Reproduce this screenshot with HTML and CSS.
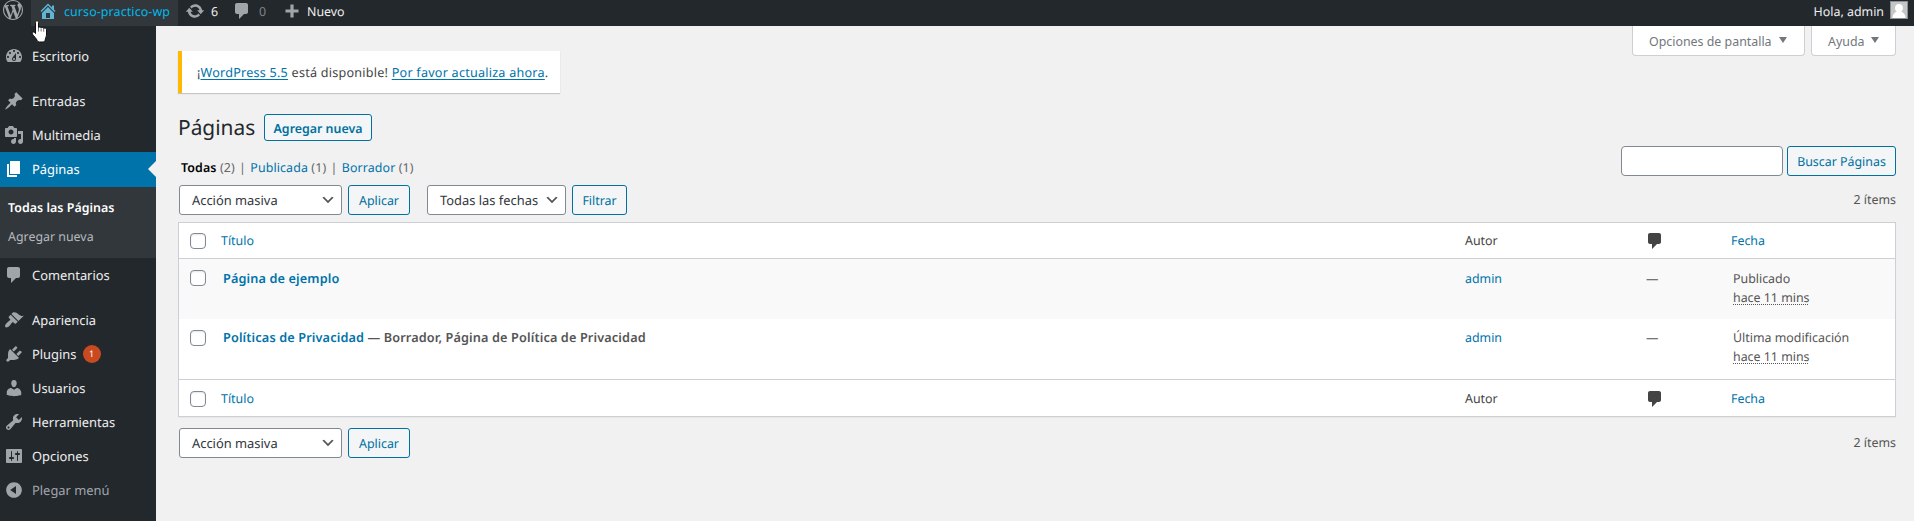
FILE: index.html
```html
<!DOCTYPE html>
<html lang="es">
<head>
<meta charset="utf-8">
<title>Páginas ‹ curso-practico-wp — WordPress</title>
<link rel="stylesheet" href="styles.css">
</head>
<body>
<svg class="sprite" aria-hidden="true">
  <symbol id="comment" viewBox="0 0 20 20"><path d="M5 2h9c1.1 0 2 .9 2 2v7c0 1.1-.9 2-2 2h-2l-5 5v-5H5c-1.1 0-2-.9-2-2V4c0-1.1.9-2 2-2z"/></symbol>
</svg>
<header class="adminbar">
  <a class="bar-logo"><svg class="icon" viewBox="0 0 20 20"><path d="M20 10c0-5.51-4.49-10-10-10C4.48 0 0 4.49 0 10c0 5.52 4.48 10 10 10 5.51 0 10-4.48 10-10zM7.78 15.37L4.37 6.22c.55-.02 1.17-.08 1.17-.08.5-.06.44-1.13-.06-1.11 0 0-1.45.11-2.37.11-.18 0-.37 0-.58-.01C4.12 2.69 6.87 1.11 10 1.11c2.33 0 4.45.87 6.05 2.34-.68-.11-1.65.39-1.65 1.58 0 .74.45 1.36.9 2.1.35.61.55 1.36.55 2.46 0 1.49-1.4 5-1.4 5l-3.03-8.37c.54-.02.82-.17.82-.17.5-.05.44-1.25-.06-1.22 0 0-1.44.12-2.38.12-.87 0-2.33-.12-2.33-.12-.5-.03-.56 1.2-.06 1.22l.92.08 1.26 3.41zM17.41 10c.24-.64.74-1.87.43-4.25.7 1.29 1.05 2.71 1.05 4.25 0 3.29-1.73 6.24-4.4 7.78.97-2.59 1.94-5.2 2.92-7.78zM6.1 18.09C3.12 16.65 1.11 13.53 1.11 10c0-1.3.23-2.48.72-3.59C3.25 10.3 4.67 14.2 6.1 18.09zm4.03-6.63l2.58 6.98c-.86.29-1.76.45-2.71.45-.79 0-1.57-.11-2.29-.33.81-2.38 1.62-4.74 2.42-7.1z"/></svg></a>
  <a class="bar-site"><svg class="icon" viewBox="0 0 20 20"><path d="M16 8.5l1.53 1.53-1.06 1.06L10 4.6l-6.47 6.5-1.06-1.07L10 2.5l4 4v-2h2v4zm-6-2.46l6 5.99V18H4v-5.97zM12 17v-5H8v5h4z"/></svg><span>curso-practico-wp</span></a>
  <a class="bar-item bar-updates"><svg class="icon" viewBox="0 0 20 20"><path d="M10.2 3.28c3.53 0 6.43 2.61 6.92 6h2.08l-3.5 4-3.5-4h2.32c-.45-1.97-2.21-3.45-4.32-3.45-1.45 0-2.73.71-3.54 1.78L4.95 5.66C6.23 4.2 8.11 3.28 10.2 3.28zm-.4 13.44c-3.52 0-6.43-2.61-6.92-6H.8l3.5-4c1.17 1.33 2.33 2.67 3.5 4H5.48c.45 1.97 2.21 3.45 4.32 3.45 1.45 0 2.73-.71 3.54-1.78l1.71 1.95c-1.28 1.46-3.15 2.38-5.25 2.38z"/></svg><span>6</span></a>
  <a class="bar-item bar-comments"><svg class="icon"><use href="#comment"/></svg><span>0</span></a>
  <a class="bar-item bar-new"><svg class="icon" viewBox="0 0 20 20"><path d="M16.5 8.4v3.200h-4.900v4.900H8.400v-4.900H3.500V8.400h4.900V3.500h3.200v4.900z"/></svg><span>Nuevo</span></a>
  <a class="bar-user"><span>Hola, admin</span>
    <svg class="avatar" viewBox="0 0 18 18"><path fill="#8c8f94" d="M0 0h18v18H0z"/><path fill="#c6c6c6" d="M1 1h16v16H1z"/><path fill="#fff" d="M9 3c2.400 0 4 1.700 4 3.900 0 1.700-.8 2.900-1.800 3.700 2.600.9 4.200 3.300 4.300 6.400h-13c.1-3.100 1.700-5.500 4.300-6.400C5.800 9.800 5 8.600 5 6.900 5 4.700 6.600 3 9 3z"/></svg></a>
</header>
<svg class="pointer" viewBox="0 0 17 24"><path fill="#fff" stroke="#111" stroke-width="1" d="M4.500 2.500c0-2.300 3-2.300 3 0v5.200c.3-1.200 2.500-1 2.600.3.500-1 2.500-.8 2.600.6.600-1 2.800-.7 2.800 1.100v5.500c0 1.500-1.300 3-1.300 4.500 0 1.200-1 2.300-2.200 2.300H8.300c-1 0-1.600-.5-2-1.300-1-2.400-3.400-4.300-4.900-6.600-1.100-1.900 1-2.900 2.300-1.500l.8.900z"/><path stroke="#111" stroke-width=".6" d="M7.500 8v3.500M10.100 8.500v3M12.700 9.200v2.500"/></svg>

<div class="layout">
<nav class="menu">
  <a class="entry"><svg class="icon" viewBox="0 0 20 20"><path d="M3.760 16h12.480c1.100-1.370 1.760-3.110 1.760-5 0-4.420-3.580-8-8-8s-8 3.580-8 8c0 1.890.66 3.630 1.760 5zM10 4c.55 0 1 .45 1 1s-.45 1-1 1-1-.45-1-1 .45-1 1-1zM6 6c.55 0 1 .45 1 1s-.45 1-1 1-1-.45-1-1 .45-1 1-1zm8 0c.55 0 1 .45 1 1s-.45 1-1 1-1-.45-1-1 .45-1 1-1zm-5.370 5.550L12 7v6c0 1.100-.9 2-2 2s-2-.9-2-2c0-.57.24-1.080.63-1.450zM4 10c.55 0 1 .45 1 1s-.45 1-1 1-1-.45-1-1 .45-1 1-1zm12 0c.55 0 1 .45 1 1s-.45 1-1 1-1-.45-1-1 .45-1 1-1zm-5 3c0-.55-.45-1-1-1s-1 .45-1 1 .45 1 1 1 1-.45 1-1z"/></svg>Escritorio</a>
  <div class="separator"></div>
  <a class="entry"><svg class="icon" viewBox="0 0 20 20"><path d="M10.440 3.020l1.820-1.820 6.360 6.350-1.830 1.820c-1.050-.68-2.480-.57-3.410.36l-.75.75c-.92.93-1.040 2.350-.35 3.410l-1.830 1.820-2.410-2.410-2.800 2.790c-.42.42-3.380 2.710-3.800 2.290s1.860-3.390 2.280-3.810l2.790-2.790L4.100 9.360l1.830-1.820c1.050.69 2.480.57 3.400-.36l.75-.75c.93-.92 1.050-2.350.36-3.410z"/></svg>Entradas</a>
  <a class="entry"><svg class="icon" viewBox="0 0 20 20"><path d="M13 11V4c0-.55-.45-1-1-1h-1.670L9 1H5L3.670 3H2c-.55 0-1 .45-1 1v7c0 .55.45 1 1 1h10c.55 0 1-.45 1-1zM7 4.500c1.380 0 2.500 1.120 2.500 2.500S8.380 9.500 7 9.500 4.500 8.380 4.500 7 5.620 4.500 7 4.500zM14 6h5v10.500c0 1.380-1.120 2.500-2.500 2.500S14 17.880 14 16.500s1.120-2.500 2.500-2.500c.17 0 .34.02.5.05V9h-3V6zm-4 8.050V13h2v3.500c0 1.380-1.120 2.500-2.500 2.500S7 17.880 7 16.500 8.120 14 9.500 14c.17 0 .34.02.5.05z"/></svg>Multimedia</a>
  <a class="entry current"><svg class="icon" viewBox="0 0 20 20"><path d="M6 15V2h10v13H6zm-1 1h8v2H3V5h2v11z"/></svg>Páginas</a>
  <div class="submenu"><a class="sub-current">Todas las Páginas</a><a>Agregar nueva</a></div>
  <a class="entry"><svg class="icon"><use href="#comment"/></svg>Comentarios</a>
  <div class="separator"></div>
  <a class="entry"><svg class="icon" viewBox="0 0 20 20"><path d="M14.480 11.060L7.410 3.990l1.500-1.500c.5-.56 2.300-.47 3.510.32 1.210.8 1.430 1.280 2.910 2.100 1.180.64 2.450 1.260 4.450.85zm-.71.71L6.700 4.700 4.930 6.470c-.39.39-.39 1.020 0 1.410l1.060 1.060c.39.39.39 1.030 0 1.420-.6.6-1.430 1.110-2.210 1.690-.35.26-.7.53-1.010.84C1.430 14.230.4 16.080 1.400 17.070c.99 1 2.840-.03 4.180-1.360.31-.31.58-.66.85-1.020.57-.78 1.080-1.610 1.690-2.210.39-.39 1.020-.39 1.410 0l1.060 1.060c.39.39 1.020.39 1.410 0z"/></svg>Apariencia</a>
  <a class="entry"><svg class="icon" viewBox="0 0 20 20"><path d="M13.110 4.360L9.870 7.600 8 5.730l3.240-3.240c.35-.34 1.050-.2 1.560.32.52.51.66 1.210.31 1.550zm-8 1.770l.91-1.120 9.010 9.010-1.190.84c-.71.71-2.630 1.160-3.820 1.160H6.140L4.900 17.260c-.59.59-1.540.59-2.120 0-.59-.58-.59-1.530 0-2.120l1.240-1.240v-3.880c0-1.130.4-3.190 1.090-3.890zm7.260 3.970l3.240-3.240c.34-.35 1.040-.21 1.550.31.52.51.66 1.210.31 1.550l-3.240 3.250z"/></svg>Plugins<span class="count">1</span></a>
  <a class="entry"><svg class="icon" viewBox="0 0 20 20"><path d="M10 9.250c-2.270 0-2.730-3.440-2.730-3.440C7 4.020 7.820 2 9.970 2c2.160 0 2.980 2.020 2.710 3.810 0 0-.41 3.440-2.680 3.440zm0 2.570L12.720 10c2.390 0 4.520 2.330 4.520 4.530v2.490s-3.650 1.130-7.240 1.130c-3.650 0-7.240-1.130-7.240-1.130v-2.490c0-2.250 1.940-4.480 4.470-4.480z"/></svg>Usuarios</a>
  <a class="entry"><svg class="icon" viewBox="0 0 20 20"><path d="M16.680 9.770c-1.340 1.340-3.300 1.670-4.950.99l-5.410 6.520c-.99.99-2.590.99-3.580 0s-.99-2.590 0-3.570l6.520-5.420c-.68-1.650-.35-3.610.99-4.950 1.280-1.280 3.120-1.620 4.720-1.060l-2.890 2.890 2.820 2.820 2.860-2.870c.53 1.580.18 3.390-1.080 4.650zM3.810 16.210c.4.39 1.040.39 1.430 0 .4-.4.4-1.040 0-1.430-.39-.4-1.030-.4-1.430 0-.39.39-.39 1.030 0 1.430z"/></svg>Herramientas</a>
  <a class="entry"><svg class="icon" viewBox="0 0 20 20"><path d="M18 16V4c0-.55-.45-1-1-1H3c-.55 0-1 .45-1 1v12c0 .55.45 1 1 1h14c.55 0 1-.45 1-1zM8 11h1c.55 0 1 .45 1 1s-.45 1-1 1H8v1.500c0 .28-.22.5-.5.5s-.5-.22-.5-.5V13H6c-.55 0-1-.45-1-1s.45-1 1-1h1V5.500c0-.28.22-.5.5-.5s.5.22.5.5V11zm5-2h-1c-.55 0-1-.45-1-1s.45-1 1-1h1V5.500c0-.28.22-.5.5-.5s.5.22.5.5V7h1c.55 0 1 .45 1 1s-.45 1-1 1h-1v5.500c0 .28-.22.5-.5.5s-.5-.22-.5-.5V9z"/></svg>Opciones</a>
  <a class="entry collapse"><svg class="icon" viewBox="0 0 20 20"><path d="M10 2.160c4.330 0 7.840 3.510 7.840 7.840s-3.510 7.840-7.840 7.840S2.160 14.330 2.160 10 5.710 2.160 10 2.160zm2 11.720V6.120L6.180 9.970z"/></svg>Plegar menú</a>
</nav>

<main class="content">
  <div class="top">
    <div class="notice"><p>¡<a>WordPress 5.5</a> está disponible! <a>Por favor actualiza ahora</a>.</p></div>
    <div class="screen-tabs">
      <button class="tab tab-options">Opciones de pantalla<i></i></button>
      <button class="tab tab-help">Ayuda<i></i></button>
    </div>
  </div>
  <div class="heading"><h1>Páginas</h1><a class="btn btn-add">Agregar nueva</a></div>
  <div class="filters">
    <ul class="views">
      <li class="v-all"><b>Todas</b> <span>(2)</span></li><li class="bar">|</li>
      <li class="v-pub"><a>Publicada</a> <span>(1)</span></li><li class="bar">|</li>
      <li><a>Borrador</a> <span>(1)</span></li>
    </ul>
    <div class="search"><input class="search-box" type="text"><a class="btn btn-search">Buscar Páginas</a></div>
  </div>
  <div class="tablenav">
    <div class="select sel-bulk">Acción masiva<svg viewBox="0 0 20 20"><path d="M5 6l5 5 5-5 2 1-7 7-7-7 2-1z"/></svg></div>
    <a class="btn btn-apply">Aplicar</a>
    <div class="select sel-date">Todas las fechas<svg viewBox="0 0 20 20"><path d="M5 6l5 5 5-5 2 1-7 7-7-7 2-1z"/></svg></div>
    <a class="btn btn-filter">Filtrar</a>
    <span class="items">2 ítems</span>
  </div>
  <div class="table">
    <div class="row head"><i class="check"></i><a>Título</a><span>Autor</span><svg class="icon"><use href="#comment"/></svg><a>Fecha</a></div>
    <div class="row body odd"><i class="check"></i><p class="title"><a>Página de ejemplo</a></p><a>admin</a><span class="dash">—</span><p class="date">Publicado<br><abbr>hace 11 mins</abbr></p></div>
    <div class="row body even"><i class="check"></i><p class="title"><a>Políticas de Privacidad</a> — Borrador, Página de Política de Privacidad</p><a>admin</a><span class="dash">—</span><p class="date">Última modificación<br><abbr>hace 11 mins</abbr></p></div>
    <div class="row foot"><i class="check"></i><a>Título</a><span>Autor</span><svg class="icon"><use href="#comment"/></svg><a>Fecha</a></div>
  </div>
  <div class="tablenav bottom">
    <div class="select sel-bulk">Acción masiva<svg viewBox="0 0 20 20"><path d="M5 6l5 5 5-5 2 1-7 7-7-7 2-1z"/></svg></div>
    <a class="btn btn-apply">Aplicar</a>
    <span class="items">2 ítems</span>
  </div>
</main>
</div>
</body>
</html>
```
FILE: styles.css
```css
* { box-sizing: border-box; }
body {
  margin: 0;
  height: 521px;
  overflow: hidden;
  background: #f1f1f1;
  color: #444;
  font: 12.4px/19px "Noto Sans", "Open Sans", sans-serif;
  text-rendering: geometricPrecision;
}
p, h1, ul { margin: 0; padding: 0; font-weight: 400; }
a { color: #0073aa; }
.sprite { display: none; }
.icon { width: 20px; height: 20px; flex: none; fill: currentColor; }

/* Admin bar */
.adminbar {
  display: flex;
  height: 26px;
  padding-left: 3px;
  background: #23282d;
  color: #eee;
}
.adminbar a { display: flex; align-items: center; height: 26px; padding-bottom: 4px; color: #eee; }
.adminbar .icon { color: #a0a5aa; }
.adminbar .bar-logo { width: 28px; padding-bottom: 6px; }
.adminbar .bar-site { width: 147px; padding-left: 7px; gap: 6px; background: #32373c; color: #00b9eb; letter-spacing: .12px; }
.bar-site .icon { color: #5fb5d3; }
.adminbar .bar-updates { width: 52px; padding-left: 7px; gap: 6px; }
.adminbar .bar-comments { width: 52px; padding-left: 2px; gap: 7px; }
.bar-comments span { color: #7c8186; }
.adminbar .bar-new { gap: 5px; }
.adminbar .bar-user { margin-left: auto; padding-right: 6px; gap: 6px; }
.avatar { width: 18px; height: 18px; margin-top: -2px; }
.pointer { position: absolute; left: 31px; top: 20px; width: 17px; height: 24px; z-index: 2; }

/* Side menu */
.layout { display: flex; height: 495px; }
.menu { width: 156px; flex: none; padding-top: 13px; background: #23282d; }
.entry {
  display: flex;
  align-items: center;
  height: 34.2px;
  padding-left: 4px;
  gap: 8px;
  color: #eee;
  font-size: 12.9px;
}
.entry .icon { color: #a0a5aa; margin-top: -1px; }
.separator { height: 10.800px; }
.current {
  background: #0073aa;
  color: #fff;
}
.current .icon { color: #fff; }
.current::after {
  content: "";
  margin-left: auto;
  border: 8px solid transparent;
  border-right-color: #f1f1f1;
  border-left: 0;
}
.submenu { height: 71.400px; padding: 7px 8px; background: #32373c; }
.submenu a { display: block; height: 29px; line-height: 28px; color: #b4b9be; }
.submenu .sub-current { color: #fff; font-weight: 600; letter-spacing: .05px; }
.count {
  width: 18px;
  height: 18px;
  margin-left: -2px;
  border-radius: 9px;
  background: #ca4a1f;
  color: #fff;
  font-size: 9px;
  line-height: 18px;
  text-align: center;
}
.collapse, .collapse .icon { color: #a0a5aa; }

/* Content */
.content { flex: 1; padding: 0 18px 0 22px; }
.top { display: flex; justify-content: space-between; height: 88px; }
.notice {
  width: 382px;
  height: 42px;
  margin-top: 25px;
  padding: 12px 15px;
  border-left: 4px solid #ffb900;
  background: #fff;
  box-shadow: 0 1px 1px rgba(0, 0, 0, .18);
  font-size: 12.6px;
  letter-spacing: .23px;
  white-space: nowrap;
}
.notice a { text-decoration: underline; text-underline-offset: 2px; }
.screen-tabs { display: flex; gap: 6px; }
.tab {
  display: flex;
  align-items: center;
  gap: 7px;
  height: 30px;
  padding: 1px 0 0 16px;
  border: 1px solid #ccd0d4;
  border-top: 0;
  border-radius: 0 0 4px 4px;
  background: #fff;
  color: #72777c;
  font: inherit;
  white-space: nowrap;
}
.tab i { border: 4px solid transparent; border-top: 6px solid #72777c; border-bottom: 0; margin-top: -2px; }
.tab-options { width: 173px; }
.tab-help { width: 85px; }

.btn {
  display: flex;
  align-items: center;
  justify-content: center;
  height: 30px;
  border: 1px solid #0071a1;
  border-radius: 3px;
  background: #f3f5f6;
  color: #0071a1;
  white-space: nowrap;
}
.heading { display: flex; align-items: center; height: 27px; gap: 9px; }
.heading h1 { width: 77px; padding-top: 1px; font-size: 20.900px; line-height: 27px; color: #23282d; white-space: nowrap; }
.btn-add { width: 108px; height: 27px; padding-top: 1px; font-weight: 600; }

.filters { display: flex; justify-content: space-between; height: 44px; padding-top: 5px; }
.views { display: flex; padding: 12px 0 0 3px; list-style: none; white-space: nowrap; color: #666; letter-spacing: .12px; }
.views b { color: #000; font-weight: 600; }
.views .bar { width: 15.500px; text-align: center; }
.search { display: flex; gap: 4px; }
.search-box { width: 162px; height: 30px; border: 1px solid #7e8993; border-radius: 4px; background: #fff; }
.btn-search { width: 109px; }

.tablenav { display: flex; height: 37px; padding-left: 1px; }
.select {
  display: flex;
  align-items: center;
  justify-content: space-between;
  height: 30px;
  padding: 0 5px 0 12px;
  border: 1px solid #7e8993;
  border-radius: 3px;
  background: #fff;
  color: #32373c;
  font-size: 12.9px;
  white-space: nowrap;
}
.select svg { width: 16px; height: 16px; fill: #555; }
.sel-bulk { width: 163px; }
.sel-date { width: 139px; margin-left: 17px; }
.btn-apply { width: 62px; margin-left: 6px; }
.btn-filter { width: 55px; margin-left: 6px; }
.items { margin-left: auto; padding-top: 5px; color: #555; }

.table {
  height: 195px;
  border: 1px solid #ccd0d4;
  background: #fff;
  box-shadow: 0 1px 1px rgba(0, 0, 0, .04);
}
.row { display: grid; grid-template-columns: 42px 1243px 180px 87px 1fr; }
.row > :nth-child(3) { padding-left: 1px; }
.head { height: 36px; border-bottom: 1px solid #ccd0d4; align-items: center; }
.foot { height: 38px; border-top: 1px solid #ccd0d4; align-items: center; }
.row .icon { color: #444; margin-left: 1px; }
.body { height: 60px; padding-top: 10px; color: #555; }
.odd { background: #f9f9f9; }
.even { padding-top: 9px; }
.check {
  width: 16px;
  height: 16px;
  margin-left: 11px;
  border: 1px solid #7e8993;
  border-radius: 4px;
  background: #fff;
  box-shadow: inset 0 1px 2px rgba(0, 0, 0, .1);
}
.odd .check { margin-top: 1px; }
.even .check { margin-top: 2px; }
.title { padding-left: 2px; font-size: 12.700px; font-weight: 600; letter-spacing: .13px; }
.dash { padding-left: 2px; }
.date { padding-left: 2px; line-height: 19px; }
.date abbr { text-decoration: underline dotted 1px; text-underline-offset: 2px; }
.bottom { padding-top: 11px; height: 50px; }
```
